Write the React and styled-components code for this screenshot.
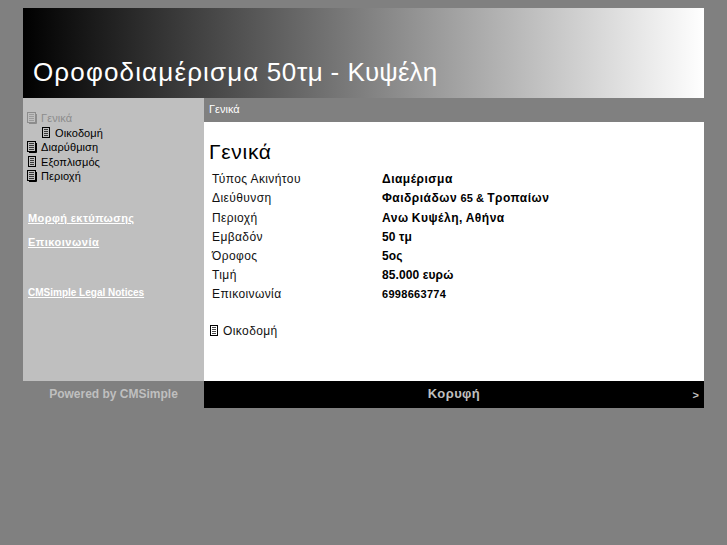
import React from 'react'
import { styled, createGlobalStyle } from 'styled-components'

const GlobalStyle = createGlobalStyle`
	html, body {
		margin: 0;
		padding: 0;
		background: #808080;
		font-family: "Liberation Sans", Arial, sans-serif;
	}
`

const DocIcon = ({ stacked, color = '#000', paper = '#bfbfbf' }) => (
	<IconBox viewBox="0 0 12 12">
		{stacked && <path d="M9.5 2v9.5H2" fill="none" stroke={color} strokeWidth="1" />}
		<rect x={stacked ? 0.5 : 1.5} y="0.5" width={stacked ? 8 : 7} height="10" fill={paper} stroke={color} />
		<path
			d={stacked ? 'M2 2.5h5M2 4.5h5M2 6.5h5M2 8.5h5' : 'M3 2.5h4M3 4.5h4M3 6.5h4M3 8.5h4'}
			stroke={color}
			strokeWidth="1"
			opacity="0.7"
		/>
	</IconBox>
)

const menu = [
	{ label: 'Γενικά', stacked: true, active: true },
	{ label: 'Οικοδομή', sub: true },
	{ label: 'Διαρύθμιση', stacked: true },
	{ label: 'Εξοπλισμός' },
	{ label: 'Περιοχή', stacked: true }
]

export default function App() {
	const details = [
		['Τύπος Ακινήτου', 'Διαμέρισμα'],
		['Διεύθυνση', <>Φαιδριάδων <Small>65 &amp; </Small>Τροπαίων</>],
		['Περιοχή', 'Ανω Κυψέλη, Αθήνα'],
		['Εμβαδόν', <Plain>50 τμ</Plain>],
		['Όροφος', <Plain>5ος</Plain>],
		['Τιμή', <Plain>85.000 ευρώ</Plain>],
		['Επικοινωνία', <Small>6998663774</Small>]
	]

	return (
		<>
			<GlobalStyle />
			<Page>
				<Header>
					<Title>
						<TitleWord $spacing={1.15}>Οροφοδιαμέρισμα</TitleWord>{' '}
						<TitleWord $spacing={0.6}>50τμ</TitleWord>{' '}
						<TitleWord $spacing={1}>-</TitleWord>{' '}
						<TitleWord $spacing={0.1}>Κυψέλη</TitleWord>
					</Title>
				</Header>
				<Columns>
					<Sidebar>
						<Menu>
							{menu.map((item) => (
								<MenuItem key={item.label} $sub={item.sub} $active={item.active}>
									<DocIcon stacked={item.stacked} color={item.active ? '#8c8c8c' : '#000'} />
									{item.label}
								</MenuItem>
							))}
						</Menu>
						<SideLink $top={27} $spacing={0.4}>Μορφή εκτύπωσης</SideLink>
						<SideLink $top={10} $spacing={0.5}>Επικοινωνία</SideLink>
						<LegalLink>CMSimple Legal Notices</LegalLink>
					</Sidebar>
					<Main>
						<Crumb>Γενικά</Crumb>
						<Content>
							<Heading>Γενικά</Heading>
							<Details>
								{details.map(([name, value]) => (
									<Row key={name}>
										<Name>{name}</Name>
										<Value>{value}</Value>
									</Row>
								))}
							</Details>
							<NextLink>
								<DocIcon paper="#fff" />
								Οικοδομή
							</NextLink>
						</Content>
					</Main>
				</Columns>
				<Footer>
					<Powered>Powered by CMSimple</Powered>
					<TopBar>
						<TopLink>Κορυφή</TopLink>
						<Next>&gt;</Next>
					</TopBar>
				</Footer>
			</Page>
		</>
	)
}

const Page = styled('div')`
	width: 681px;
	margin: 8px 0 0 23px;
`

const Header = styled('header')`
	height: 90px;
	display: flex;
	align-items: flex-end;
	background: linear-gradient(to right, #000 0%, #fff 100%);
`

const Title = styled('h1')`
	margin: 0 0 11px 10px;
	font-size: 26px;
	line-height: 30px;
	font-weight: 400;
	color: #fff;
	white-space: nowrap;
`

const TitleWord = styled('span')`
	letter-spacing: ${(p) => p.$spacing}px;
`

const Columns = styled('div')`
	display: flex;
	height: 283px;
`

const Sidebar = styled('nav')`
	width: 181px;
	flex: none;
	padding: 13px 0 0 4px;
	box-sizing: border-box;
	background: #bfbfbf;
`

const Menu = styled('div')`
	display: flex;
	flex-direction: column;
`

const MenuItem = styled('div')`
	display: flex;
	align-items: center;
	gap: 2px;
	height: 14.5px;
	padding-left: ${(p) => (p.$sub ? '14px' : '0')};
	font-size: 11px;
	letter-spacing: 0.1px;
	color: ${(p) => (p.$active ? '#8c8c8c' : '#000')};
`

const IconBox = styled('svg')`
	width: 12px;
	height: 12px;
	flex: none;
`

const SideLink = styled('div')`
	margin: ${(p) => p.$top}px 0 0 1px;
	font-size: 11px;
	line-height: 14px;
	font-weight: 700;
	letter-spacing: ${(p) => p.$spacing}px;
	color: #fff;
	text-decoration: underline;
`

const LegalLink = styled('div')`
	margin: 37px 0 0 1px;
	font-size: 10px;
	line-height: 14px;
	font-weight: 700;
	color: #fff;
	text-decoration: underline;
`

const Main = styled('main')`
	flex: 1;
	display: flex;
	flex-direction: column;
	background: #fff;
`

const Crumb = styled('div')`
	height: 24px;
	padding-left: 5px;
	font-size: 11px;
	line-height: 23px;
	color: #fff;
	background: #808080;
`

const Content = styled('div')`
	padding: 18px 0 0 5px;
`

const Heading = styled('h2')`
	margin: 0;
	font-size: 21px;
	line-height: 24px;
	font-weight: 400;
	letter-spacing: 0.7px;
	color: #000;
`

const Details = styled('div')`
	margin: 5.6px 0 0 3px;
	display: flex;
	flex-direction: column;
`

const Row = styled('div')`
	display: flex;
	align-items: center;
	height: 19.2px;
`

const Name = styled('div')`
	width: 170px;
	flex: none;
	font-size: 12px;
	letter-spacing: 0.4px;
	color: #111;
`

const Value = styled('div')`
	font-size: 12px;
	font-weight: 700;
	letter-spacing: 0.5px;
	word-spacing: -0.5px;
	color: #000;
`

const Small = styled('span')`
	font-size: 11px;
	letter-spacing: 0.3px;
`

const Plain = styled('span')`
	letter-spacing: 0.1px;
	word-spacing: 0;
`

const NextLink = styled('div')`
	margin-top: 20.4px;
	display: flex;
	align-items: center;
	gap: 2px;
	font-size: 12px;
	letter-spacing: 0.4px;
	color: #111;
`

const Footer = styled('footer')`
	display: flex;
	height: 27px;
`

const Powered = styled('div')`
	width: 181px;
	flex: none;
	font-size: 12px;
	line-height: 26px;
	font-weight: 700;
	text-align: center;
	color: #bfbfbf;
`

const TopBar = styled('div')`
	flex: 1;
	position: relative;
	background: #000;
	color: #bfbfbf;
	font-size: 13px;
	font-weight: 700;
	line-height: 25px;
	text-align: center;
`

const TopLink = styled('span')`
	letter-spacing: 0.4px;
`

const Next = styled('span')`
	position: absolute;
	right: 5px;
	top: 2px;
	font-size: 11px;
`
